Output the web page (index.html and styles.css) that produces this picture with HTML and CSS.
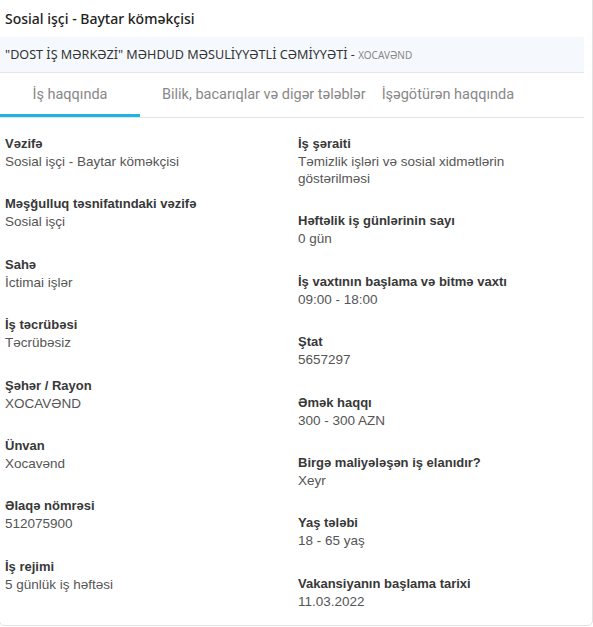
FILE: index.html
```html
<!DOCTYPE html>
<html lang="az">
<head>
    <meta charset="UTF-8">
    <meta name="viewport" content="width=device-width, initial-scale=1.0">
    <title>Sosial işçi - Baytar köməkçisi</title>
    <link rel="stylesheet" href="styles.css">
</head>
<body>

    <div class="card">
        <div class="card-inner">
            <h1 class="vacancy-title">Sosial işçi - Baytar köməkçisi</h1>

            <div class="company-bar">
                "DOST İŞ MƏRKƏZİ" MƏHDUD MƏSULİYYƏTLİ CƏMİYYƏTİ - <span class="company-city">XOCAVƏND</span>
            </div>

            <div class="tabs">
                <div class="tab tab-active">İş haqqında</div>
                <div class="tab tab-skills">Bilik, bacarıqlar və digər tələblər</div>
                <div class="tab tab-employer">İşəgötürən haqqında</div>
            </div>

            <div class="details">
                <div class="details-col">
                    <div class="item">
                        <div class="item-label">Vəzifə</div>
                        <div class="item-value">Sosial işçi - Baytar köməkçisi</div>
                    </div>
                    <div class="item">
                        <div class="item-label">Məşğulluq təsnifatındaki vəzifə</div>
                        <div class="item-value">Sosial işçi</div>
                    </div>
                    <div class="item">
                        <div class="item-label">Sahə</div>
                        <div class="item-value">İctimai işlər</div>
                    </div>
                    <div class="item">
                        <div class="item-label">İş təcrübəsi</div>
                        <div class="item-value">Təcrübəsiz</div>
                    </div>
                    <div class="item">
                        <div class="item-label">Şəhər / Rayon</div>
                        <div class="item-value">XOCAVƏND</div>
                    </div>
                    <div class="item">
                        <div class="item-label">Ünvan</div>
                        <div class="item-value">Xocavənd</div>
                    </div>
                    <div class="item">
                        <div class="item-label">Əlaqə nömrəsi</div>
                        <div class="item-value">512075900</div>
                    </div>
                    <div class="item">
                        <div class="item-label">İş rejimi</div>
                        <div class="item-value">5 günlük iş həftəsi</div>
                    </div>
                </div>

                <div class="details-col">
                    <div class="item">
                        <div class="item-label">İş şəraiti</div>
                        <div class="item-value">Təmizlik işləri və sosial xidmətlərin göstərilməsi</div>
                    </div>
                    <div class="item">
                        <div class="item-label">Həftəlik iş günlərinin sayı</div>
                        <div class="item-value">0 gün</div>
                    </div>
                    <div class="item">
                        <div class="item-label">İş vaxtının başlama və bitmə vaxtı</div>
                        <div class="item-value">09:00 - 18:00</div>
                    </div>
                    <div class="item">
                        <div class="item-label">Ştat</div>
                        <div class="item-value">5657297</div>
                    </div>
                    <div class="item">
                        <div class="item-label">Əmək haqqı</div>
                        <div class="item-value">300 - 300 AZN</div>
                    </div>
                    <div class="item">
                        <div class="item-label">Birgə maliyələşən iş elanıdır?</div>
                        <div class="item-value">Xeyr</div>
                    </div>
                    <div class="item">
                        <div class="item-label">Yaş tələbi</div>
                        <div class="item-value">18 - 65 yaş</div>
                    </div>
                    <div class="item">
                        <div class="item-label">Vakansiyanın başlama tarixi</div>
                        <div class="item-value">11.03.2022</div>
                    </div>
                </div>
            </div>
        </div>
    </div>

</body>
</html>
```

FILE: styles.css
```css
body {
    margin: 0;
    background-color: #ffffff;
    font-family: 'Liberation Sans', Arial, sans-serif;
    overflow: hidden;
}
.card {
    background-color: #ffffff;
    width: 594px;
    height: 632px;
    margin: -6px 0 0 -1px;
    padding-top: 5px;
    border: 1px solid #e2e2e2;
    border-radius: 5px;
    box-sizing: border-box;
}
.card-inner {
    margin-right: 8px;
}
.vacancy-title {
    margin: 0;
    padding: 0 5px;
    height: 37px;
    line-height: 37px;
    font-family: 'Noto Sans', sans-serif;
    font-size: 14px;
    font-weight: 500;
    color: #222;
}
.company-bar {
    background-color: #f5f9fd;
    height: 35px;
    line-height: 36px;
    padding: 0 5px;
    border-bottom: 1px solid #e4e6e8;
    font-family: 'Noto Sans', sans-serif;
    font-size: 12.6px;
    color: #333;
}
.company-city {
    font-size: 10px;
    color: #888;
}
.tabs {
    display: flex;
    height: 44px;
    border-bottom: 1px solid #e4e4e4;
}
.tab {
    font-family: Roboto, 'Liberation Sans', sans-serif;
    font-size: 14.5px;
    color: #888;
    line-height: 44px;
    height: 44px;
    box-sizing: border-box;
}
.tab-active {
    width: 140px;
    text-align: center;
    border-bottom: 3px solid #1fb3e5;
}
.tab-skills {
    margin-left: 22px;
}
.tab-employer {
    margin-left: 16px;
}
.details {
    display: grid;
    grid-template-columns: 293px 255px;
    padding: 16px 0 0 5px;
}
.item {
    margin-bottom: 24.4px;
}
.item-label {
    font-size: 13px;
    font-weight: bold;
    color: #383838;
    line-height: 19px;
}
.item-value {
    font-size: 13.5px;
    color: #555;
    line-height: 17px;
}
```
